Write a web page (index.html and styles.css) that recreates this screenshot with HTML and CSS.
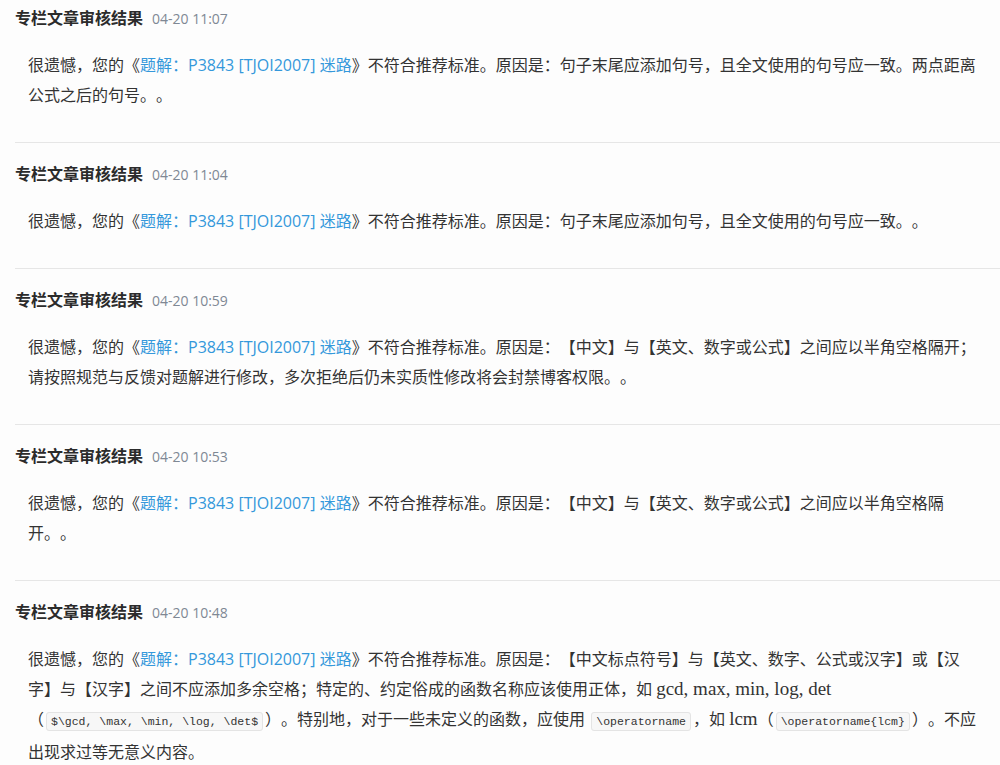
FILE: index.html
```html
<!DOCTYPE html>
<html lang="zh-CN">
<head>
	<meta charset="UTF-8">
	<meta name="viewport" content="width=device-width, initial-scale=1.0">
	<link rel="stylesheet" href="styles.css">
	<title>消息</title>
</head>
<body>
	<ul class="messages">
		<li class="message">
			<div class="message-head">
				<span class="message-title">专栏文章审核结果</span>
				<span class="message-time">04-20 11:07</span>
			</div>
			<p class="message-body">很遗憾，您的《<a href="#">题解：P3843 [TJOI2007] 迷路</a>》不符合推荐标准。原因是：句子末尾应添加句号，且全文使用的句号应一致。两点距离公式之后的句号。。</p>
		</li>
		<li class="message">
			<div class="message-head">
				<span class="message-title">专栏文章审核结果</span>
				<span class="message-time">04-20 11:04</span>
			</div>
			<p class="message-body">很遗憾，您的《<a href="#">题解：P3843 [TJOI2007] 迷路</a>》不符合推荐标准。原因是：句子末尾应添加句号，且全文使用的句号应一致。。</p>
		</li>
		<li class="message">
			<div class="message-head">
				<span class="message-title">专栏文章审核结果</span>
				<span class="message-time">04-20 10:59</span>
			</div>
			<p class="message-body">很遗憾，您的《<a href="#">题解：P3843 [TJOI2007] 迷路</a>》不符合推荐标准。原因是：【中文】与【英文、数字或公式】之间应以半角空格隔开；<br>请按照规范与反馈对题解进行修改，多次拒绝后仍未实质性修改将会封禁博客权限。。</p>
		</li>
		<li class="message">
			<div class="message-head">
				<span class="message-title">专栏文章审核结果</span>
				<span class="message-time">04-20 10:53</span>
			</div>
			<p class="message-body">很遗憾，您的《<a href="#">题解：P3843 [TJOI2007] 迷路</a>》不符合推荐标准。原因是：【中文】与【英文、数字或公式】之间应以半角空格隔开。。</p>
		</li>
		<li class="message">
			<div class="message-head">
				<span class="message-title">专栏文章审核结果</span>
				<span class="message-time">04-20 10:48</span>
			</div>
			<p class="message-body">很遗憾，您的《<a href="#">题解：P3843 [TJOI2007] 迷路</a>》不符合推荐标准。原因是：【中文标点符号】与【英文、数字、公式或汉字】或【汉字】与【汉字】之间不应添加多余空格；特定的、约定俗成的函数名称应该使用正体，如 <span class="math">gcd, max, min, log, det</span>（<code>$\gcd, \max, \min, \log, \det$</code>）。特别地，对于一些未定义的函数，应使用 <code>\operatorname</code>，如 <span class="math">lcm</span>（<code>\operatorname{lcm}</code>）。不应出现求过等无意义内容。</p>
		</li>
	</ul>
</body>
</html>
```

FILE: styles.css
```css
* {
	box-sizing: border-box;
}

:root {
	--bg: #fdfdfd;
	--fg: #333;
	--fg2: #7f8894;
	--border: #e6e6e6;
	--accent: #3498db;
}

body {
	margin: 0;
	background: var(--bg);
	color: var(--fg);
	font-family: "Open Sans", "Noto Sans CJK SC", sans-serif;
	font-size: 16px;
	text-spacing-trim: space-all;
}

a {
	color: var(--accent);
	text-decoration: none;
}

ul {
	margin: 0;
	padding: 0;
	list-style: none;
}

.messages {
	margin-left: 15px;
}

.message {
	padding: 21px 0 32px;
	border-top: 1px solid var(--border);
}
.message:first-child {
	padding-top: 8px;
	border-top: none;
}

.message-head {
	display: flex;
	align-items: baseline;
	gap: 9px;
	line-height: 20px;
}

.message-title {
	font-size: 16px;
	font-weight: bold;
	color: #2b2b2b;
}

.message-time {
	font-size: 14px;
	color: var(--fg2);
}

.message-body {
	margin: 21px 0 0;
	padding-left: 13px;
	max-width: 968px;
	line-height: 30px;
}

.math {
	font-family: "Liberation Serif", serif;
	font-size: 19px;
	line-height: 1;
}

code {
	font-family: "Liberation Mono", monospace;
	font-size: 11.5px;
	margin: 0 2px;
	padding: 2px 4px;
	background: #f7f7f7;
	border: 1px solid #e4e4e4;
	border-radius: 3px;
	white-space: nowrap;
}
```
